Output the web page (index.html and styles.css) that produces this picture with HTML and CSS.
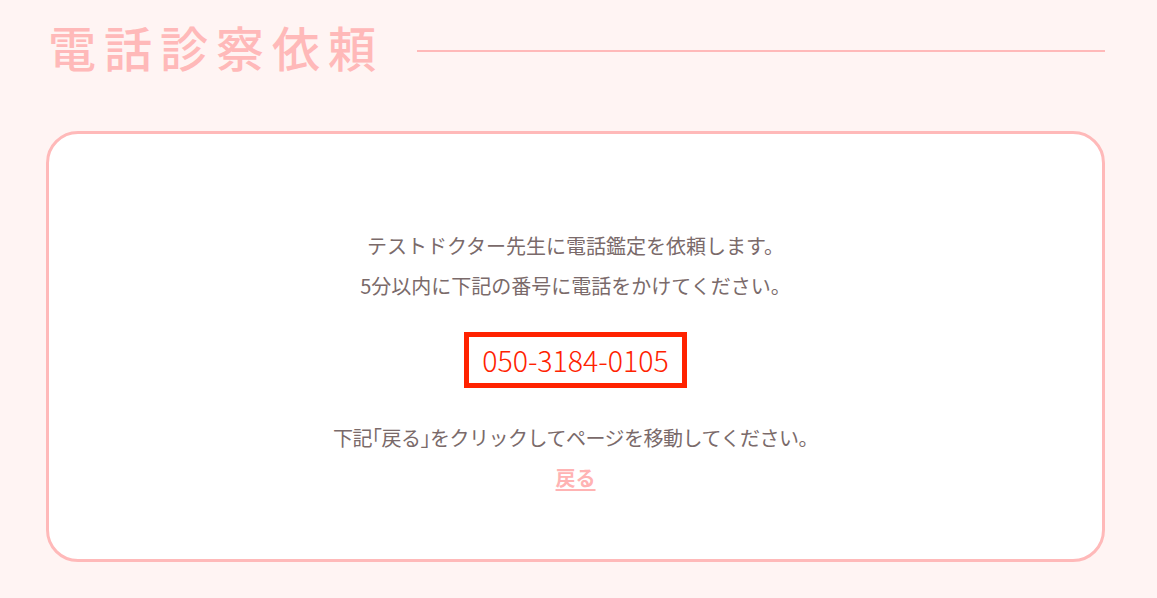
FILE: index.html
```html
<!DOCTYPE html>
<html lang="ja">
<head>
  <meta charset="UTF-8" />
  <meta name="viewport" content="width=device-width, initial-scale=1.0"/>
  <title>電話診察依頼</title>
  <link rel="stylesheet" href="styles.css">
</head>
<body>
  <div class="wrap">
    <div class="page-head">
      <h1>電話診察依頼</h1>
      <div class="head-line"></div>
    </div>

    <div class="card">
      <p class="msg">テストドクター先生に電話鑑定を依頼します。</p>
      <p class="msg">5分以内に下記の番号に電話をかけてください。</p>

      <div class="tel-box">050-3184-0105</div>

      <p class="msg tight">下記<span class="br">「</span>戻る<span class="br">」</span>をクリックしてページを移動してください。</p>
      <a class="back" href="#">戻る</a>
    </div>
  </div>
</body>
</html>
```

FILE: styles.css
```css
body {
  background: #fff4f3;
  font-family: "Noto Sans CJK JP", "Noto Sans", sans-serif;
  color: #7a6a6a;
  margin: 0;
}
.wrap {
  padding: 0 52px 38px 46px;
}
.page-head {
  display: flex;
  align-items: center;
  padding: 15px 0 0;
}
h1 {
  margin: 0;
  padding-left: 2px;
  font-size: 48px;
  line-height: 62px;
  font-weight: 500;
  letter-spacing: 8px;
  color: #ffb9b9;
}
.head-line {
  flex: 1;
  height: 2px;
  background: #ffb9b9;
  margin: 10px 0 0 33px;
}
.card {
  margin-top: 54px;
  background: #fff;
  border: 3px solid #ffb9b9;
  border-radius: 32px;
  padding: 92px 0 61px;
  display: flex;
  flex-direction: column;
  align-items: center;
}
.msg {
  margin: 0;
  font-size: 20px;
  line-height: 40px;
}
.tight {
  letter-spacing: -0.5px;
}
.br {
  font-feature-settings: "halt";
}
.tel-box {
  margin: 26px 0 30px;
  border: 5px solid #ff2200;
  width: 213px;
  height: 46px;
  line-height: 46px;
  text-align: center;
  color: #ff2200;
  font-size: 28.5px;
  font-weight: 300;
}
.back {
  font-size: 20px;
  line-height: 40px;
  font-weight: 600;
  color: #ffb3b3;
  text-decoration: underline;
  text-underline-offset: 3px;
}
```
